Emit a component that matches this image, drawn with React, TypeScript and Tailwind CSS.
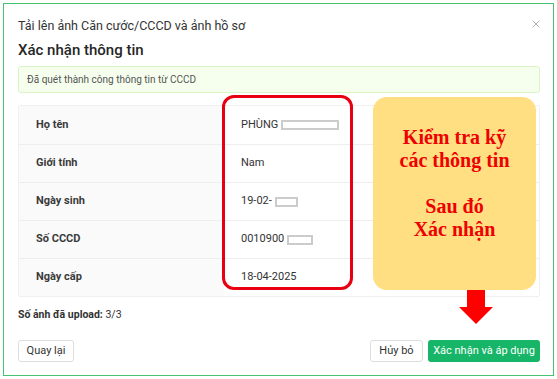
import { X } from 'lucide-react'

type Row = {
  label: string
  value: string
  blank?: number
}

const rows: Row[] = [
  { label: 'Họ tên', value: 'PHÙNG', blank: 58 },
  { label: 'Giới tính', value: 'Nam' },
  { label: 'Ngày sinh', value: '19-02-', blank: 23 },
  { label: 'Số CCCD', value: '0010900', blank: 26 },
  { label: 'Ngày cấp', value: '18-04-2025' },
]

function Blank({ w }: { w: number }) {
  // redacted part of the value
  return (
    <span
      className="inline-block h-[10px] border-2 border-[#cccccc] bg-white ml-[3px] align-middle"
      style={{ width: w }}
    />
  )
}

export default function App() {
  return (
    <div
      className="relative w-[557px] h-[379px] bg-white p-[3px] overflow-hidden"
      style={{ fontFamily: 'Roboto, "Open Sans", sans-serif' }}
    >
      <div className="h-full border border-[#45c373] pt-[14px] pl-[14px] pr-[13px] flex flex-col">
        <div className="flex items-center justify-between h-[16px]">
          <span className="text-[12.5px] text-[#333] leading-[16px]">
            Tải lên ảnh Căn cước/CCCD và ảnh hồ sơ
          </span>
          <X size={12} strokeWidth={1.5} className="text-[#9a9a9a] mr-[-2px] mt-[-4px]" />
        </div>

        <h2 className="mt-[6px] text-[15px] leading-[20px] font-medium text-[#262626]">
          Xác nhận thông tin
        </h2>

        <div className="mt-[6px] h-[27px] flex items-center px-[8px] bg-[#f6ffee] border border-[#d9f5c3] rounded-[3px] text-[10px] text-[#555]">
          Đã quét thành công thông tin từ CCCD
        </div>

        <div className="mt-[12px] border border-[#f0f0f0] rounded-[2px]">
          {rows.map((r, i) => (
            <div
              key={r.label}
              className={`flex h-[38px] ${i > 0 ? 'border-t border-[#eeeeee]' : ''}`}
            >
              <div className="w-[205px] bg-[#fafafa] flex items-center pl-[17px] text-[11px] font-bold text-[#3a3a3a]">
                {r.label}
              </div>
              <div className="flex-1 flex items-center pl-[17px] text-[11px] text-[#333]">
                {r.value}
                {r.blank && <Blank w={r.blank} />}
              </div>
            </div>
          ))}
        </div>

        <div className="mt-[11px] text-[10.5px] leading-[14px] text-[#333]">
          <span className="font-bold">Số ảnh đã upload:</span> 3/3
        </div>

        <div className="mt-[18px] flex justify-between">
          <button className="h-[22px] w-[56px] border border-[#dedede] rounded-[3px] bg-white text-[11px] text-[#333]">
            Quay lại
          </button>
          <div className="flex gap-[5px]">
            <button className="h-[22px] w-[53px] border border-[#dedede] rounded-[3px] bg-white text-[11px] text-[#333]">
              Hủy bỏ
            </button>
            <button className="h-[22px] w-[112px] rounded-[3px] bg-[#17b567] text-[11px] text-white">
              Xác nhận và áp dụng
            </button>
          </div>
        </div>
      </div>

      {/* annotations over the dialog */}
      <div className="absolute left-[222px] top-[95px] w-[131px] h-[195px] border-[3px] border-[#e80010] rounded-[12px]" />

      <div
        className="absolute left-[373px] top-[97px] w-[163px] h-[193px] bg-[#ffdf82] rounded-[14px] pt-[29px] text-center text-[20px] leading-[23px] font-bold text-[#ee0000]"
        style={{ fontFamily: '"Liberation Serif", serif' }}
      >
        <div>Kiểm tra kỹ</div>
        <div>các thông tin</div>
        <div>&nbsp;</div>
        <div>Sau đó</div>
        <div>Xác nhận</div>
      </div>

      <svg className="absolute left-[459px] top-[290px]" width="34" height="35" viewBox="0 0 34 35">
        <rect x="8" y="0" width="18" height="18" fill="#ff0000" />
        <polygon points="0,17 34,17 17,34" fill="#ff0000" />
      </svg>
    </div>
  )
}
